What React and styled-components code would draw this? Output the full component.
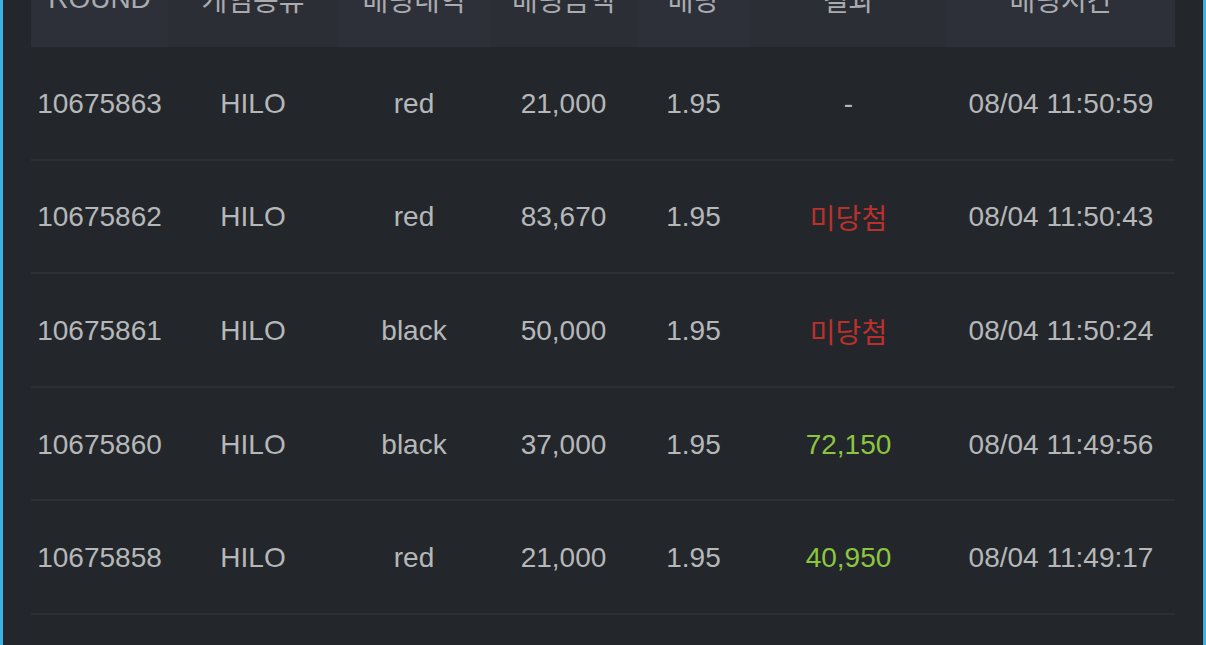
import React from 'react';
import styled, { createGlobalStyle } from 'styled-components';

const GlobalStyle = createGlobalStyle`
  html, body {
    margin: 0;
    padding: 0;
    background: #23272b;
    overflow: hidden;
  }
  body {
    font-family: "Liberation Sans", Arial, "Noto Sans CJK KR", sans-serif;
  }
`

const COLS = '137px 170px 152px 147px 113px 197px 228px';

const Frame = styled.div`
  box-sizing: border-box;
  min-height: 100vh;
  margin-top: -49px;
  padding: 0 28px 0 28px;
  background: #23272b;
  border-left: 3px solid #3bb2e2;
  border-right: 3px solid #3bb2e2;
  box-shadow: inset -1px 0 0 #1b1e21;
`

const Table = styled.div`
  display: flex;
  flex-direction: column;
`

const HeadRow = styled.div`
  display: grid;
  grid-template-columns: ${COLS};
  height: 96px;
`

const HeadCell = styled.div`
  display: flex;
  align-items: center;
  justify-content: center;
  background: ${p => (p.$odd ? '#2d3038' : '#2b2e35')};
  color: #a9abaf;
  font-size: 28px;
  font-weight: 400;
`

const Row = styled.div`
  display: grid;
  grid-template-columns: ${COLS};
  box-sizing: border-box;
  height: 113.6px;
  border-bottom: 2px solid #2c3035;
`

const Cell = styled.div`
  display: flex;
  align-items: center;
  justify-content: center;
  padding-top: 2px;
  font-size: 28px;
  color: ${p => p.$color || '#b6b7b9'};
`

const heads = ['ROUND', '게임종류', '배팅내역', '배팅금액', '배당', '결과', '배팅시간'];

const rows = [
  { round: '10675863', game: 'HILO', pick: 'red', amount: '21,000', odds: '1.95', result: '-', time: '08/04 11:50:59' },
  { round: '10675862', game: 'HILO', pick: 'red', amount: '83,670', odds: '1.95', result: '미당첨', lose: true, time: '08/04 11:50:43' },
  { round: '10675861', game: 'HILO', pick: 'black', amount: '50,000', odds: '1.95', result: '미당첨', lose: true, time: '08/04 11:50:24' },
  { round: '10675860', game: 'HILO', pick: 'black', amount: '37,000', odds: '1.95', result: '72,150', win: true, time: '08/04 11:49:56' },
  { round: '10675858', game: 'HILO', pick: 'red', amount: '21,000', odds: '1.95', result: '40,950', win: true, time: '08/04 11:49:17' },
  { round: '10675857', game: 'HILO', pick: 'black', amount: '30,000', odds: '1.95', result: '58,500', win: true, time: '08/04 11:48:51' },
];

const resultColor = r => (r.lose ? '#bb302b' : r.win ? '#8cc63f' : undefined);

const App = () => {
  return (
    <Frame>
      <GlobalStyle />
      <Table>
        <HeadRow>
          {heads.map((h, i) => (
            <HeadCell key={h} $odd={i % 2 === 0}>{h}</HeadCell>
          ))}
        </HeadRow>
        {rows.map(r => (
          <Row key={r.round}>
            <Cell>{r.round}</Cell>
            <Cell>{r.game}</Cell>
            <Cell>{r.pick}</Cell>
            <Cell>{r.amount}</Cell>
            <Cell>{r.odds}</Cell>
            <Cell $color={resultColor(r)}>{r.result}</Cell>
            <Cell>{r.time}</Cell>
          </Row>
        ))}
      </Table>
    </Frame>
  );
}

export default App;
